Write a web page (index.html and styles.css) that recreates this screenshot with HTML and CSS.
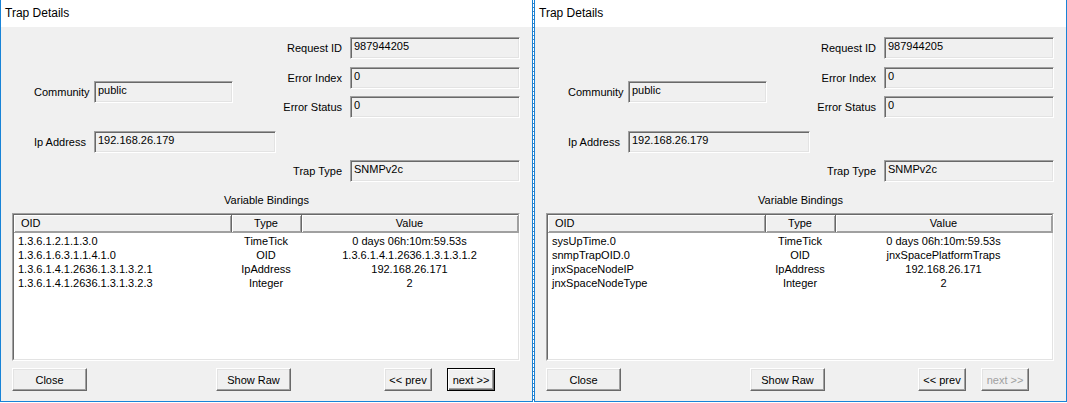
FILE: index.html
```html
<!DOCTYPE html>
<html lang="en">
<head>
    <meta charset="UTF-8">
    <title>Trap Details</title>
    <link rel="stylesheet" href="styles.css">
</head>
<body>

<div class="desktop">

    <!-- first trap: raw OIDs -->
    <div class="dialog">
        <div class="title">Trap Details</div>
        <div class="content">
            <div class="top">
                <div class="left-col">
                    <div class="row first"><span class="label">Community</span><div class="field f-community">public</div></div>
                    <div class="row second"><span class="label">Ip Address</span><div class="field f-ip">192.168.26.179</div></div>
                </div>
                <div class="right-col">
                    <div class="row r1"><span class="label">Request ID</span><div class="field">987944205</div></div>
                    <div class="row r2"><span class="label">Error Index</span><div class="field">0</div></div>
                    <div class="row r3"><span class="label">Error Status</span><div class="field">0</div></div>
                    <div class="row r4"><span class="label">Trap Type</span><div class="field">SNMPv2c</div></div>
                </div>
            </div>

            <div class="bind-label">Variable Bindings</div>
            <div class="list">
                <div class="list-inner">
                    <table>
                        <thead>
                            <tr><th class="c-oid">OID</th><th class="c-type">Type</th><th class="c-val">Value</th></tr>
                        </thead>
                        <tbody>
                            <tr><td class="c-oid">1.3.6.1.2.1.1.3.0</td><td>TimeTick</td><td>0 days 06h:10m:59.53s</td></tr>
                            <tr><td class="c-oid">1.3.6.1.6.3.1.1.4.1.0</td><td>OID</td><td>1.3.6.1.4.1.2636.1.3.1.3.1.2</td></tr>
                            <tr><td class="c-oid">1.3.6.1.4.1.2636.1.3.1.3.2.1</td><td>IpAddress</td><td>192.168.26.171</td></tr>
                            <tr><td class="c-oid">1.3.6.1.4.1.2636.1.3.1.3.2.3</td><td>Integer</td><td>2</td></tr>
                        </tbody>
                    </table>
                </div>
            </div>

            <div class="buttons">
                <button class="btn b-close">Close</button>
                <button class="btn b-raw">Show Raw</button>
                <button class="btn b-prev">&lt;&lt; prev</button>
                <button class="btn b-next default">next &gt;&gt;</button>
            </div>
        </div>
    </div>

    <div class="gap"></div>

    <!-- second trap: resolved names -->
    <div class="dialog">
        <div class="title">Trap Details</div>
        <div class="content">
            <div class="top">
                <div class="left-col">
                    <div class="row first"><span class="label">Community</span><div class="field f-community">public</div></div>
                    <div class="row second"><span class="label">Ip Address</span><div class="field f-ip">192.168.26.179</div></div>
                </div>
                <div class="right-col">
                    <div class="row r1"><span class="label">Request ID</span><div class="field">987944205</div></div>
                    <div class="row r2"><span class="label">Error Index</span><div class="field">0</div></div>
                    <div class="row r3"><span class="label">Error Status</span><div class="field">0</div></div>
                    <div class="row r4"><span class="label">Trap Type</span><div class="field">SNMPv2c</div></div>
                </div>
            </div>

            <div class="bind-label">Variable Bindings</div>
            <div class="list">
                <div class="list-inner">
                    <table>
                        <thead>
                            <tr><th class="c-oid">OID</th><th class="c-type">Type</th><th class="c-val">Value</th></tr>
                        </thead>
                        <tbody>
                            <tr><td class="c-oid">sysUpTime.0</td><td>TimeTick</td><td>0 days 06h:10m:59.53s</td></tr>
                            <tr><td class="c-oid">snmpTrapOID.0</td><td>OID</td><td>jnxSpacePlatformTraps</td></tr>
                            <tr><td class="c-oid">jnxSpaceNodeIP</td><td>IpAddress</td><td>192.168.26.171</td></tr>
                            <tr><td class="c-oid">jnxSpaceNodeType</td><td>Integer</td><td>2</td></tr>
                        </tbody>
                    </table>
                </div>
            </div>

            <div class="buttons">
                <button class="btn b-close">Close</button>
                <button class="btn b-raw">Show Raw</button>
                <button class="btn b-prev">&lt;&lt; prev</button>
                <button class="btn b-next" disabled>next &gt;&gt;</button>
            </div>
        </div>
    </div>

</div>

</body>
</html>
```

FILE: styles.css
```css
/* Basic styling */
body { margin: 0; background: #fff; font-family: "Liberation Sans", Arial, sans-serif; font-size: 11px; color: #000; }
.desktop { display: flex; width: 1067px; height: 403px; }

/* Window frame */
.dialog { width: 533px; height: 402px; box-sizing: border-box; border: 1px solid #1883d7; border-top: none; display: flex; flex-direction: column; background: #f0f0f0; }
.gap { width: 1px; background: repeating-linear-gradient(to bottom, #fff 0, #fff 3px, #5b7fa8 3px, #5b7fa8 4px); }
.title { height: 27px; line-height: 26px; padding-left: 4px; background: #fff; font-size: 12px; font-family: "Liberation Sans", Arial, sans-serif; }
.content { flex: 1; }

/* Header fields */
.top { display: flex; height: 166px; }
.row { display: flex; align-items: center; height: 22px; }
.label { flex-shrink: 0; white-space: nowrap; }
.field { flex-shrink: 0; }
.left-col { padding-left: 33px; width: 242px; flex-shrink: 0; }
.left-col .label { width: 60px; }
.left-col .first { margin-top: 54px; }
.left-col .second { margin-top: 28px; }
.right-col { margin-left: auto; margin-right: 12px; width: 244px; flex-shrink: 0; }
.right-col .label { text-align: right; width: 66px; margin-right: 8px; }
.right-col .field { width: 170px; }
.r1 { margin-top: 10px; }
.r2 { margin-top: 8px; }
.r3 { margin-top: 7px; }
.r4 { margin-top: 42px; }

.field { height: 22px; box-sizing: border-box; padding: 0 3px; line-height: 17px; border: 1px solid; border-color: #a0a0a0 #fff #fff #a0a0a0; box-shadow: inset 1px 1px #696969, inset -1px -1px #e3e3e3; background: #f0f0f0; white-space: nowrap; }
.f-community { width: 139px; }
.f-ip { width: 182px; }

/* Variable bindings list */
.bind-label { height: 14px; line-height: 14px; text-align: center; }
.list { margin: 6px 0 0 11px; width: 508px; height: 148px; box-sizing: border-box; border: 1px solid; border-color: #a0a0a0 #fff #fff #a0a0a0; }
.list-inner { height: 100%; box-sizing: border-box; border: 1px solid; border-color: #696969 #e3e3e3 #e3e3e3 #696969; background: #fff; }
table { border-collapse: collapse; table-layout: fixed; width: 504px; }
th { height: 17px; padding: 0; font-weight: normal; background: #f0f0f0; box-sizing: border-box; border-right: 1px solid #696969; border-bottom: 1px solid #a0a0a0; box-shadow: inset 1px 1px #fff, inset -1px -1px #a0a0a0; }
th.c-oid { width: 217px; text-align: left; padding-left: 7px; }
th.c-type { width: 70px; }
th.c-val { width: 217px; border-right-color: #a0a0a0; }
td { height: 14px; line-height: 14px; padding: 0; text-align: center; white-space: nowrap; }
td.c-oid { text-align: left; padding-left: 4px; }
tbody tr:first-child td { padding-top: 1px; }

/* Buttons */
.buttons { display: flex; margin-top: 7px; }
.btn { height: 23px; box-sizing: border-box; padding: 0; font: 11px "Liberation Sans", Arial, sans-serif; color: #000; background: #f0f0f0; border: 1px solid; border-color: #fff #696969 #696969 #fff; box-shadow: inset -1px -1px #a0a0a0, inset 1px 1px #e3e3e3; }
.b-close { width: 75px; margin-left: 11px; }
.b-raw { width: 75px; margin-left: 129px; }
.b-prev { width: 48px; margin-left: 93px; }
.b-next { width: 48px; margin-left: 15px; }
.btn.default { border-color: #000; box-shadow: inset 1px 1px #fff, inset -1px -1px #696969, inset -2px -2px #a0a0a0; }
.btn:disabled { color: #a0a0a0; }
```
